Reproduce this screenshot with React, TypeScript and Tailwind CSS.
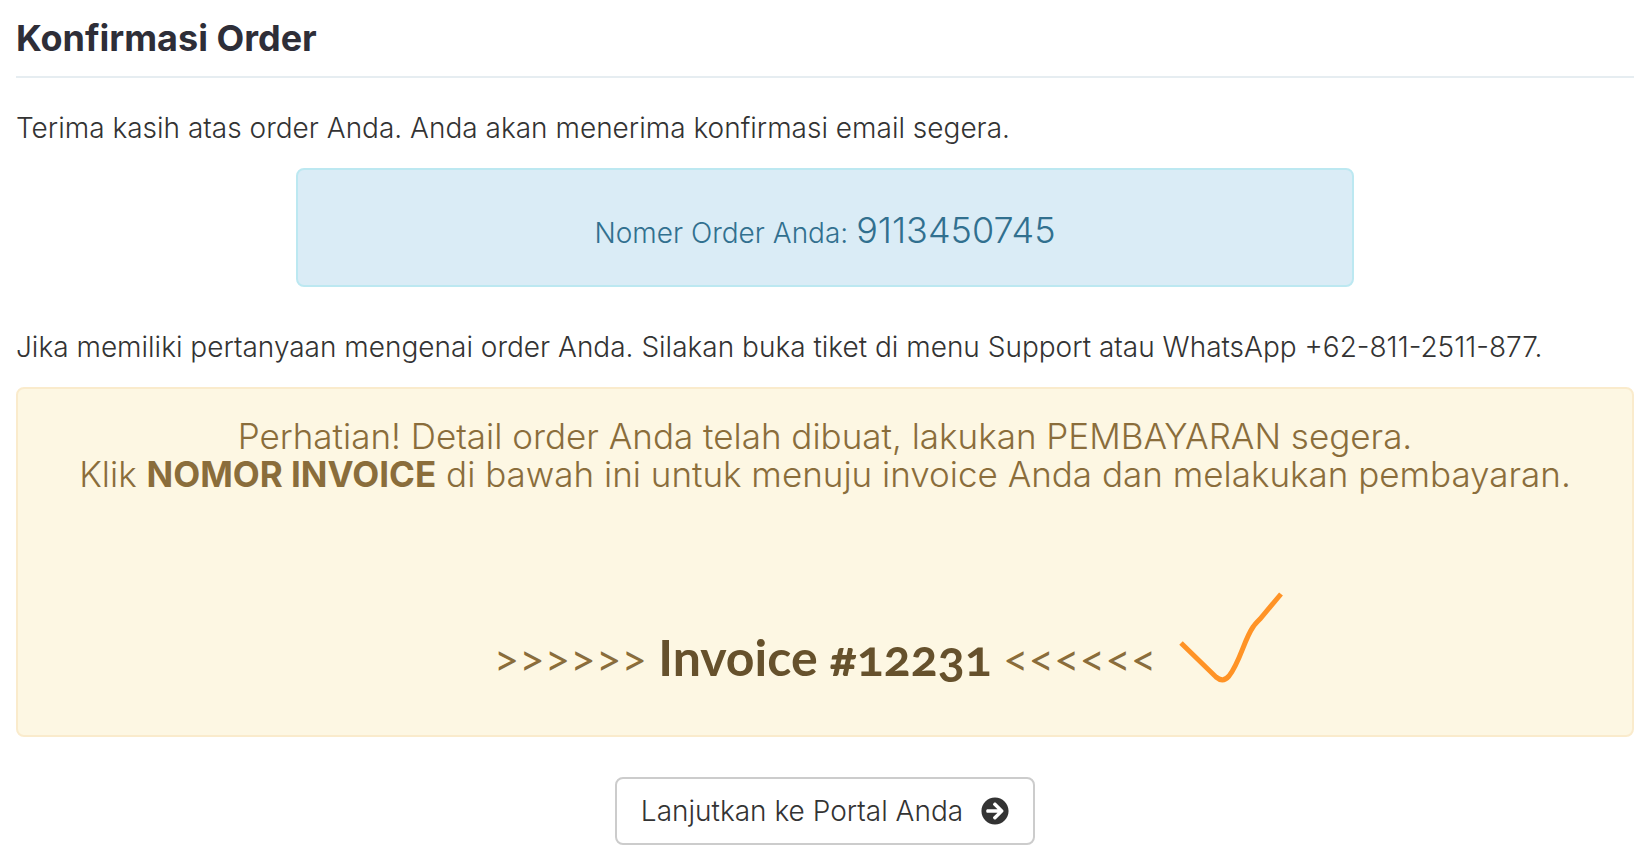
import React from 'react';
import { FaArrowCircleRight } from 'react-icons/fa';

interface AlertBoxProps {
  type: 'info' | 'warning';
  className?: string;
  children: React.ReactNode;
}

const AlertBox: React.FC<AlertBoxProps> = ({ type, className = '', children }) => {
  const getColors = () => {
    switch (type) {
      case 'info':
        return 'bg-[#daecf6] border-[#bce8f1] text-[#31708f]';
      case 'warning':
      default:
        return 'bg-[#fdf7e3] border-[#faebcc] text-[#8a6d3b]';
    }
  };

  return (
    <div className={`border-2 rounded-lg text-center ${getColors()} ${className}`}>
      {children}
    </div>
  );
};

const CheckMark: React.FC = () => (
  <svg
    className="absolute left-full -top-9 ml-5 h-[100px] w-[110px]"
    viewBox="0 0 110 100"
    fill="none"
    stroke="#ff9326"
    strokeWidth="5"
    aria-hidden="true"
  >
    <path d="M5 54 L40 88 Q47 94 53 87 C64 73 68 51 77 38 Q79 35 84 30 L105 5" />
  </svg>
);

const App: React.FC = () => {
  return (
    <main className="bg-white p-4 font-['Inter',sans-serif] font-light text-[28px] leading-10 text-[#333333]">
      <h1 className="border-b-2 border-[#e6edf1] pb-4 text-4xl leading-11 font-bold text-[#2e2e38]">
        Konfirmasi Order
      </h1>

      <p className="mt-[30px]">Terima kasih atas order Anda. Anda akan menerima konfirmasi email segera.</p>

      <AlertBox type="info" className="mx-auto mt-5 w-[65.4%] pt-[42px] pb-8">
        Nomer Order Anda: <span className="text-4xl leading-none">9113450745</span>
      </AlertBox>

      <p className="mt-10">
        Jika memiliki pertanyaan mengenai order Anda. Silakan buka tiket di menu Support atau WhatsApp +62-811-2511-877.
      </p>

      <AlertBox type="warning" className="mt-5 px-8 pt-7 pb-11">
        <h2 className="text-[35px] leading-[38px]">
          Perhatian! Detail order Anda telah dibuat, lakukan PEMBAYARAN segera.
          <br />
          Klik <strong className="font-bold">NOMOR INVOICE</strong> di bawah ini untuk menuju invoice Anda dan melakukan
          pembayaran.
        </h2>
        <div className="relative mx-auto mt-33 w-fit font-['Lato',sans-serif] text-[44px] leading-[64px] font-normal">
          &gt;&gt;&gt;&gt;&gt;&gt;{' '}
          <a href="#invoice" className="text-[50px] font-bold text-[#66512c] oldstyle-nums">
            Invoice #12231
          </a>{' '}
          &lt;&lt;&lt;&lt;&lt;&lt;
          <CheckMark />
        </div>
      </AlertBox>

      <div className="mt-10 text-center">
        <button
          type="button"
          className="inline-flex items-center gap-[18px] rounded-lg border-2 border-[#cccccc] bg-white px-6 py-3"
        >
          Lanjutkan ke Portal Anda
          <FaArrowCircleRight className="h-7 w-7" />
        </button>
      </div>
    </main>
  );
};

export default App;
